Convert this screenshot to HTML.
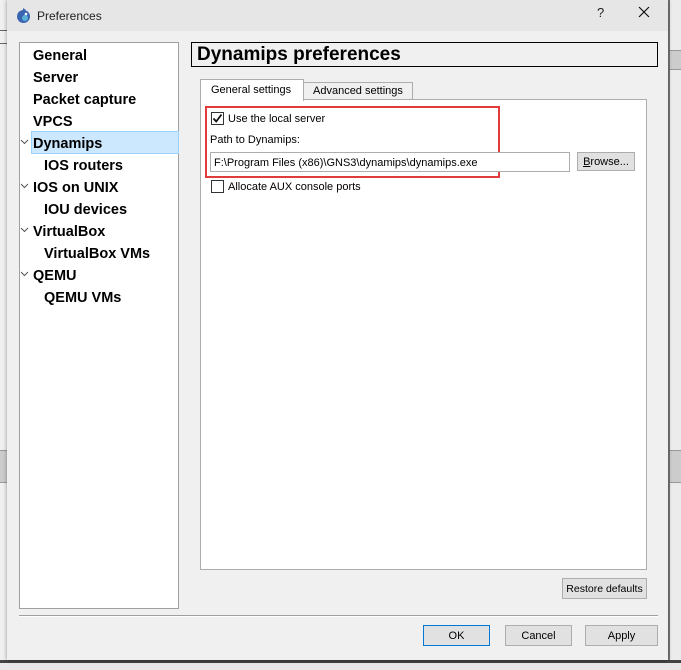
<!DOCTYPE html>
<html><head><style>
body{margin:0;width:681px;height:670px;background:#d8d8d8;position:relative;overflow:hidden;font-family:"Liberation Sans",sans-serif;}
.a{position:absolute;box-sizing:border-box;}
.t{position:absolute;white-space:nowrap;}
.tree .t{font-weight:bold;font-size:14.5px;color:#000;}
.s{font-size:11px;color:#000;}
.btn{position:absolute;box-sizing:border-box;background:#e1e1e1;border:1px solid #adadad;font-size:11px;text-align:center;white-space:nowrap;}
.cb{position:absolute;width:13px;height:13px;border:1px solid #333;background:#fff;box-sizing:border-box;}
</style></head><body>
<div class="a" style="left:0;top:0;width:8px;height:670px;background:#f0f0f0"></div>
<div class="a" style="left:0;top:30px;width:8px;height:14px;border:1px solid #666;border-left:none"></div>
<div class="a" style="left:0;top:450px;width:8px;height:33px;background:#ccc;border-top:1px solid #999;border-bottom:1px solid #999"></div>
<div class="a" style="left:668px;top:0;width:13px;height:670px;background:#ececec;border-left:2px solid #777"></div>
<div class="a" style="left:670px;top:50px;width:11px;height:20px;background:#ccc;border-top:1px solid #999;border-bottom:1px solid #999"></div>
<div class="a" style="left:670px;top:450px;width:11px;height:33px;background:#ccc;border-top:1px solid #999;border-bottom:1px solid #999"></div>
<div class="a" style="left:0;top:660px;width:681px;height:10px;background:#e8e8e8;border-top:3px solid #444"></div>
<div class="a" style="left:7px;top:0;width:661px;height:660px;background:#f0f0f0;box-shadow:0 0 4px rgba(0,0,0,.4)"></div>
<div class="a" style="left:7px;top:0;width:661px;height:31px;background:#e6e6e6"></div>
<svg class="a" style="left:16px;top:7px" width="15" height="17" viewBox="0 0 15 17"><circle cx="7.5" cy="9.5" r="6.5" fill="#3a64b0"/><circle cx="9" cy="11" r="3" fill="#5ab0d8"/><path d="M7 1 L10 3 L7 4z" fill="#3a64b0"/><circle cx="10" cy="7" r="1.3" fill="#fff"/></svg>
<div class="t" style="left:37px;top:9px;font-size:12px;color:#222">Preferences</div>
<div class="t" style="left:597px;top:5px;font-size:13px;color:#222">?</div>
<svg class="a" style="left:638px;top:6px" width="12" height="12"><path d="M1 1L11 11M11 1L1 11" stroke="#111" stroke-width="1.2"/></svg>
<div class="a tree" style="left:19px;top:42px;width:160px;height:567px;background:#fff;border:1px solid #a0a0a0">
<div class="a" style="left:11px;top:88px;width:148px;height:23px;background:#cce8ff;border:1px solid #99d1ff"></div>
<div class="t" style="left:13px;top:5px">General</div>
<div class="t" style="left:13px;top:27px">Server</div>
<div class="t" style="left:13px;top:49px">Packet capture</div>
<div class="t" style="left:13px;top:71px">VPCS</div>
<div class="t" style="left:13px;top:93px">Dynamips</div>
<div class="t" style="left:24px;top:115px">IOS routers</div>
<div class="t" style="left:13px;top:137px">IOS on UNIX</div>
<div class="t" style="left:24px;top:159px">IOU devices</div>
<div class="t" style="left:13px;top:181px">VirtualBox</div>
<div class="t" style="left:24px;top:203px">VirtualBox VMs</div>
<div class="t" style="left:13px;top:225px">QEMU</div>
<div class="t" style="left:24px;top:247px">QEMU VMs</div>
<svg class="a" style="left:0;top:96px" width="10" height="150"><g stroke="#555" fill="none" stroke-width="1"><path d="M1 1l3.5 3.5L8 1"/><path d="M1 45l3.5 3.5L8 45"/><path d="M1 89l3.5 3.5L8 89"/><path d="M1 133l3.5 3.5L8 133"/></g></svg>
</div>
<div class="a" style="left:191px;top:42px;width:467px;height:25px;border:1px solid #000;background:#f0f0f0"></div>
<div class="t" style="left:197px;top:44px;font-size:19px;font-weight:bold;color:#000">Dynamips preferences</div>
<div class="a" style="left:200px;top:99px;width:447px;height:471px;background:#fff;border:1px solid #adadad"></div>
<div class="a" style="left:303px;top:82px;width:110px;height:18px;background:#f0f0f0;border:1px solid #adadad"></div>
<div class="t s" style="left:313px;top:85px">Advanced settings</div>
<div class="a" style="left:200px;top:79px;width:104px;height:22px;background:#fff;border:1px solid #adadad;border-bottom:none"></div>
<div class="t s" style="left:211px;top:84px">General settings</div>
<div class="a" style="left:205px;top:106px;width:295px;height:72px;border:2px solid #e03c3c"></div>
<div class="cb" style="left:211px;top:112px"></div>
<svg class="a" style="left:212px;top:113px" width="11" height="11"><path d="M1.5 5.5L4.2 8.5L9.5 1.5" stroke="#111" stroke-width="1.8" fill="none"/></svg>
<div class="t s" style="left:228px;top:113px">Use the local server</div>
<div class="t s" style="left:210px;top:134px">Path to Dynamips:</div>
<div class="a" style="left:210px;top:152px;width:360px;height:20px;background:#fff;border:1px solid #adadad"></div>
<div class="t s" style="left:214px;top:157px">F:\Program Files (x86)\GNS3\dynamips\dynamips.exe</div>
<div class="btn" style="left:577px;top:152px;width:58px;height:19px;line-height:18px"><u>B</u>rowse...</div>
<div class="cb" style="left:211px;top:180px;border-color:#333"></div>
<div class="t s" style="left:228px;top:181px">Allocate AUX console ports</div>
<div class="btn" style="left:562px;top:578px;width:85px;height:21px;line-height:20px;font-size:10.5px">Restore defaults</div>
<div class="a" style="left:19px;top:615px;width:639px;height:2px;border-top:1px solid #a0a0a0;border-bottom:1px solid #fff"></div>
<div class="btn" style="left:423px;top:625px;width:67px;height:21px;line-height:20px;border-color:#0078d7">OK</div>
<div class="btn" style="left:505px;top:625px;width:67px;height:21px;line-height:20px">Cancel</div>
<div class="btn" style="left:585px;top:625px;width:73px;height:21px;line-height:20px">Apply</div>
</body></html>
